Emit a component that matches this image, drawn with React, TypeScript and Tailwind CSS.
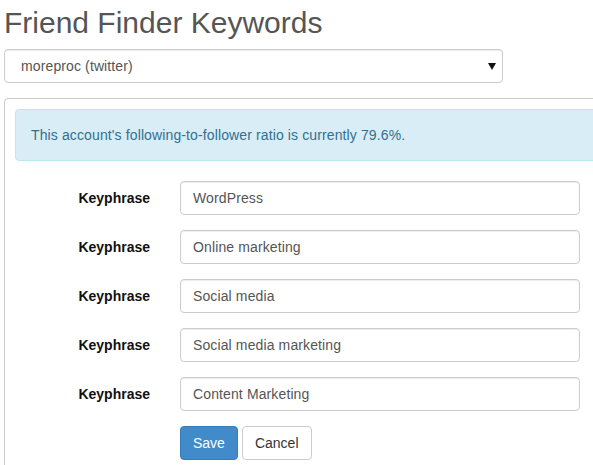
const keyphrases = [
  "WordPress",
  "Online marketing",
  "Social media",
  "Social media marketing",
  "Content Marketing",
];

function KeyphraseRow({ value }: { value: string }) {
  return (
    <div className="flex items-center mb-[15px]">
      <label className="w-[165px] pr-[30px] text-right text-[14px] font-bold text-[#111]">
        Keyphrase
      </label>
      <input
        defaultValue={value}
        className="w-[400px] h-[34px] px-[12px] text-[14px] tracking-[0.12px] text-[#555] bg-white border border-[#ccc] rounded-[4px] outline-none shadow-[inset_0_1px_1px_rgba(0,0,0,0.075)]"
      />
    </div>
  );
}

export default function App() {
  return (
    <div
      className="w-[593px] h-[465px] overflow-hidden bg-white pl-[4px] text-[14px] text-[#333]"
      style={{ fontFamily: '"Liberation Sans", Arial, sans-serif' }}
    >
      <h1 className="pt-[6px] text-[30px] leading-[33px] text-[#555] mb-[10px]">
        Friend Finder Keywords
      </h1>

      <div className="relative w-[499px] h-[34px] flex items-center pl-[16px] border border-[#ccc] rounded-[4px] bg-white text-[#555] tracking-[0.12px] shadow-[inset_0_1px_1px_rgba(0,0,0,0.075)]">
        moreproc (twitter)
        <svg
          className="absolute right-[6px] top-[13px]"
          width="8"
          height="7"
          viewBox="0 0 8 7"
        >
          <path d="M0 0 L8 0 L4 7 Z" fill="#111" />
        </svg>
      </div>

      <div className="mt-[15px] w-[620px] border border-[#ccc] rounded-tl-[4px] pt-[10px] pl-[10px] pb-[40px]">
        <div className="h-[52px] flex items-center pl-[15px] bg-[#d9edf7] border border-[#bce8f1] rounded-[4px] text-[#31708f] tracking-[0.12px] mb-[20px]">
          This account's following-to-follower ratio is currently 79.6%.
        </div>

        <form>
          {keyphrases.map((k) => (
            <KeyphraseRow key={k} value={k} />
          ))}

          <div className="flex gap-[4px] pl-[165px]">
            <button
              type="button"
              className="h-[34px] px-[12px] text-[14px] text-white bg-[#428bca] border border-[#357ebd] rounded-[4px]"
            >
              Save
            </button>
            <button
              type="button"
              className="h-[34px] px-[12px] text-[14px] text-[#333] bg-white border border-[#ccc] rounded-[4px]"
            >
              Cancel
            </button>
          </div>
        </form>
      </div>
    </div>
  );
}
